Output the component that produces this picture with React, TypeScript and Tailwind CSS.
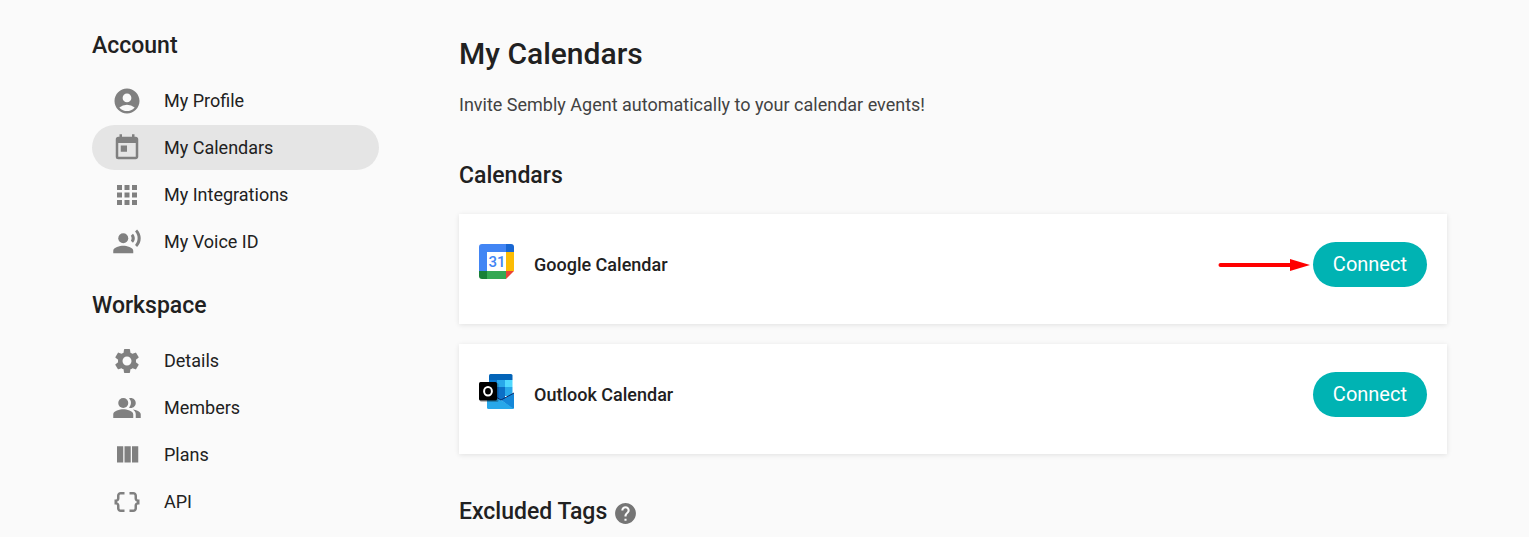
import type { ReactNode } from "react"
import type { IconType } from "react-icons"
import {
    MdAccountCircle,
    MdApps,
    MdDataObject,
    MdHelp,
    MdPeopleAlt,
    MdRecordVoiceOver,
    MdSettings,
    MdToday,
} from "react-icons/md"

type TNavItem = {
    label: string;
    icon: IconType | typeof ColumnsIcon;
    active?: boolean;
}

type TNavSection = {
    title: string;
    items: TNavItem[];
}

type TCalendarCard = {
    name: string;
    logo: ReactNode;
    highlight?: boolean;
}

const ColumnsIcon = ({ className }: { className?: string }) => (
    <svg viewBox="0 0 24 24" fill="currentColor" className={className}>
        <path d="M10 18h5V5h-5v13zm-6 0h5V5H4v13zM16 5v13h5V5h-5z" />
    </svg>
)

const GoogleCalendarLogo = () => (
    <svg viewBox="0 0 35 35" className="size-[35px]">
        <path d="M3 0h24v8H8v19H0V3a3 3 0 0 1 3-3z" fill="#4285f4" />
        <path d="M27 0h5a3 3 0 0 1 3 3v5h-8z" fill="#1967d2" />
        <path d="M27 8h8v19h-8z" fill="#fbbc04" />
        <path d="M8 27h19v8H8z" fill="#34a853" />
        <path d="M0 27h8v8H3a3 3 0 0 1-3-3z" fill="#188038" />
        <path d="M27 27h8l-8 8z" fill="#ea4335" />
        <path d="M8 8h19v19H8z" fill="#fff" />
        <text x="18" y="23" textAnchor="middle" fill="#4285f4" className="font-['Roboto',sans-serif] text-[15px] font-medium">31</text>
    </svg>
)

const OutlookLogo = () => (
    <svg viewBox="0 0 35 35" className="size-[35px]">
        <path d="M11.500 0h20.500a1.500 1.500 0 0 1 1.500 1.500V6H10V1.500A1.500 1.500 0 0 1 11.500 0z" fill="#0364b8" />
        <path d="M10 6h8v7h-8z" fill="#0a78d0" />
        <path d="M18 6h8v7h-8z" fill="#28a8ea" />
        <path d="M26 6h7.500v7H26z" fill="#50d9ff" />
        <path d="M10 13h8v13h-8z" fill="#0a5cab" />
        <path d="M18 13h8v13h-8z" fill="#0c6fc6" />
        <path d="M26 13h7.500v9H26z" fill="#28a8ea" />
        <path d="M35 19v14.500a1.500 1.500 0 0 1-1.500 1.500L22 26z" fill="#1587d8" />
        <path d="M8 19l14 7 12.500 8.500q-.5.500-1.500.500H9.500A1.500 1.500 0 0 1 8 33.500z" fill="#28a8ea" />
        <path d="M16 22.500l6 3.500 13-7" fill="none" stroke="#0a2767" strokeWidth="1" />
        <rect x="1" y="9" width="18.500" height="19" rx="1.500" fill="#000" opacity="0.25" />
        <rect x="0" y="8" width="18" height="18.500" rx="1.500" fill="#000" />
        <ellipse cx="9" cy="17.200" rx="3.900" ry="4.300" fill="none" stroke="#fff" strokeWidth="2" />
    </svg>
)

const Arrow = () => (
    <svg viewBox="0 0 92 14" className="mt-px mr-[3px] h-[14px] w-[92px] shrink-0">
        <path d="M2.500 7h72" stroke="#ff0000" strokeWidth="4" strokeLinecap="round" />
        <path d="M72 1l20 6-20 6z" fill="#ff0000" />
    </svg>
)

const sections: TNavSection[] = [
    {
        title: "Account",
        items: [
            { label: "My Profile", icon: MdAccountCircle },
            { label: "My Calendars", icon: MdToday, active: true },
            { label: "My Integrations", icon: MdApps },
            { label: "My Voice ID", icon: MdRecordVoiceOver },
        ],
    },
    {
        title: "Workspace",
        items: [
            { label: "Details", icon: MdSettings },
            { label: "Members", icon: MdPeopleAlt },
            { label: "Plans", icon: ColumnsIcon },
            { label: "API", icon: MdDataObject },
        ],
    },
]

const NavSection = ({ title, items }: TNavSection) => {
    return (
        <section>
            <h2 className="text-[23px] leading-7 font-medium">{title}</h2>
            <ul className="mt-[18px] flex flex-col gap-[2px]">
                {items.map(({ label, icon: Icon, active }) => (
                    <li key={label}>
                        <a
                            href="#"
                            aria-current={active ? "page" : undefined}
                            className={`flex h-[45px] items-center gap-[22px] rounded-full px-5 text-lg ${active ? "bg-[#e5e5e5]" : ""}`}
                        >
                            <Icon className="size-[30px] shrink-0 text-[#808080]" />
                            <span>{label}</span>
                        </a>
                    </li>
                ))}
            </ul>
        </section>
    )
}

const CalendarCard = ({ name, logo, highlight }: TCalendarCard) => {
    return (
        <div className="flex items-center bg-white px-5 pt-7 pb-[37px] shadow-[0_1px_5px_rgba(0,0,0,0.1)]">
            <div className="mb-[6px] shrink-0">{logo}</div>
            <h3 className="ml-5 flex-1 text-lg font-medium">{name}</h3>
            {highlight && <Arrow />}
            <button type="button" className="h-[45px] shrink-0 rounded-full bg-[#00b3b3] px-5 pb-0.5 text-xl text-white">
                Connect
            </button>
        </div>
    )
}

export default function App() {
    return (
        <div className="flex min-h-screen gap-20 bg-[#fafafa] pr-[82px] pl-[92px] font-['Roboto',sans-serif] text-[#212121]">
            <nav className="flex w-[287px] shrink-0 flex-col gap-7 pt-8">
                {sections.map((section) => (
                    <NavSection key={section.title} {...section} />
                ))}
            </nav>

            <main className="min-w-0 flex-1 pt-9">
                <h1 className="text-3xl font-medium">My Calendars</h1>
                <p className="mt-[21px] text-lg leading-6 text-[#424242]">
                    Invite Sembly Agent automatically to your calendar events!
                </p>

                <h2 className="mt-[45px] text-[23px] leading-7 font-medium">Calendars</h2>
                <div className="mt-6 flex flex-col gap-5">
                    <CalendarCard name="Google Calendar" logo={<GoogleCalendarLogo />} highlight />
                    <CalendarCard name="Outlook Calendar" logo={<OutlookLogo />} />
                </div>

                <div className="mt-[43px] flex items-center gap-[6px]">
                    <h2 className="text-[23px] leading-7 font-medium">Excluded Tags</h2>
                    <button type="button" aria-label="About excluded tags" className="mt-1 text-[#757575]">
                        <MdHelp className="size-[25px]" />
                    </button>
                </div>
            </main>
        </div>
    )
}
